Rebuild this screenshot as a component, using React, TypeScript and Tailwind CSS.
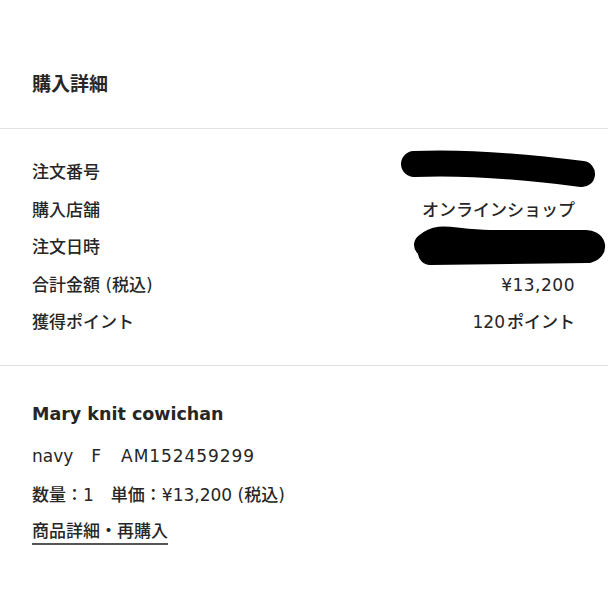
const FONT = "font-['DejaVu_Sans','Noto_Sans_CJK_JP',sans-serif]";

const ROWS: { key: string; label: string; value?: React.ReactNode; redact?: 'a' | 'b' }[] = [
  { key: 'no', label: '注文番号', redact: 'a' },
  { key: 'shop', label: '購入店舗', value: 'オンラインショップ' },
  { key: 'date', label: '注文日時', redact: 'b' },
  { key: 'total', label: '合計金額 (税込)', value: <span className="tracking-[0.03em]">¥13,200</span> },
  { key: 'pt', label: '獲得ポイント', value: <>120<span className="ml-[2px]">ポイント</span></> },
];

function Redact({ kind }: { kind: 'a' | 'b' }) {
  // hand-drawn black marker strokes over the hidden values
  if (kind === 'a') {
    return (
      <svg className="absolute left-[400px] top-[-23px]" width="200" height="44" viewBox="0 0 200 44">
        <path d="M14 14 C 60 12, 120 16, 182 24" stroke="#000" strokeWidth="26" strokeLinecap="round" fill="none" />
      </svg>
    );
  }
  return (
    <svg className="absolute left-[410px] top-[-23px]" width="198" height="44" viewBox="0 0 198 44">
      <path d="M16 20 C 30 8, 40 16, 80 17 L 176 17 C 184 17, 186 24, 178 26 L 20 28" stroke="#000" strokeWidth="24" strokeLinecap="round" strokeLinejoin="round" fill="none" />
    </svg>
  );
}

export default function App() {
  return (
    <div className={`w-[608px] h-[608px] bg-white text-[#262626] overflow-hidden ${FONT}`}>
      {/* Header */}
      <div className="px-8 pt-[70px] pb-[30px] border-b border-[#e2e2e2]">
        <h1 className="text-[19px] leading-7 font-bold">購入詳細</h1>
      </div>

      {/* Order info */}
      <div className="px-8 pt-[25px] pb-[23px] border-b border-[#e2e2e2]">
        {ROWS.map((r) => (
          <div key={r.key} className="relative h-[37.5px] flex items-center justify-between text-[17px] font-medium pr-[1px]">
            <span>{r.label}</span>
            {r.value && <span>{r.value}</span>}
            {r.redact && <span className="absolute left-[-32px] top-1/2"><Redact kind={r.redact} /></span>}
          </div>
        ))}
      </div>

      {/* Item */}
      <div className="px-8 pt-[36px]">
        <h2 className="text-[17.5px] leading-6 font-bold">Mary knit cowichan</h2>
        <p className="mt-[18px] text-[17px] leading-6 font-medium flex">
          <span>navy</span>
          <span className="ml-[18px]">F</span>
          <span className="ml-[20px] tracking-[0.055em]">AM152459299</span>
        </p>
        <p className="mt-[15px] text-[17px] leading-6 font-medium flex">
          <span>数量：1</span>
          <span className="ml-[17px]">単価：¥13,200 (税込)</span>
        </p>
        <a href="#" className="inline-block mt-[12px] text-[17px] leading-6 font-medium border-b-2 border-[#555]">商品詳細・再購入</a>
      </div>
    </div>
  );
}
